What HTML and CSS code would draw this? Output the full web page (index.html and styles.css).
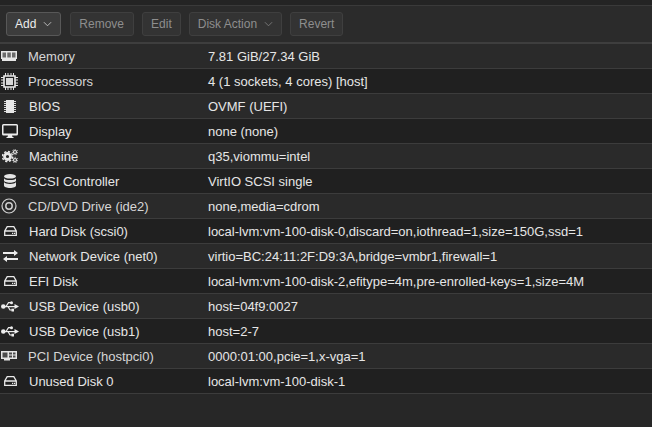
FILE: index.html
```html
<!DOCTYPE html>
<html lang="en">
<head>
    <meta charset="UTF-8">
    <meta name="viewport" content="width=device-width, initial-scale=1.0">
    <title>Hardware</title>
    <link rel="stylesheet" href="styles.css">
</head>
<body>
    <div class="top-strip"></div>

    <div class="toolbar">
        <button class="btn btn-active">Add <svg class="caret" viewBox="0 0 10 6"><path d="M1 1l4 4 4-4"/></svg></button>
        <button class="btn btn-wide">Remove</button>
        <button class="btn">Edit</button>
        <button class="btn">Disk Action <svg class="caret" viewBox="0 0 10 6"><path d="M1 1l4 4 4-4"/></svg></button>
        <button class="btn">Revert</button>
    </div>

    <div class="hw-table">
        <div class="row row-tight">
            <span class="icon"><svg viewBox="0 0 16 10" width="16" height="10"><path d="M0 0h16v8h-1v2H1V8H0z" fill="#e6e6e6"/><path d="M1.500 1.500h3.500v5H1.500zM6.300 1.500h3.500v5H6.300zM11 1.500h3.500v5H11z" fill="#6a6a6a"/></svg></span>
            <span class="name">Memory</span>
            <span class="value">7.81 GiB/27.34 GiB</span>
        </div>
        <div class="row row-tight">
            <span class="icon"><svg viewBox="0 0 17 17" width="17" height="17"><path d="M3 3h11v11H3z" fill="none" stroke="#ececec" stroke-width="1.600"/><path d="M5 5h7v7H5z" fill="#d8d8d8"/><path d="M4.500 0v3M7 0v3M10 0v3M12.500 0v3M4.500 14v3M7 14v3M10 14v3M12.500 14v3M0 4.500h3M0 7h3M0 10h3M0 12.500h3M14 4.500h3M14 7h3M14 10h3M14 12.500h3" stroke="#e4e4e4"/></svg></span>
            <span class="name">Processors</span>
            <span class="value">4 (1 sockets, 4 cores) [host]</span>
        </div>
        <div class="row">
            <span class="icon"><svg viewBox="0 0 12 13" width="12" height="13"><path d="M2 0h8v13H2z" fill="#e8e8e8"/><path d="M0 1.500h2M0 3.500h2M0 5.500h2M0 7.500h2M0 9.500h2M0 11.500h2M10 1.500h2M10 3.500h2M10 5.500h2M10 7.500h2M10 9.500h2M10 11.500h2" stroke="#d8d8d8"/></svg></span>
            <span class="name">BIOS</span>
            <span class="value">OVMF (UEFI)</span>
        </div>
        <div class="row">
            <span class="icon"><svg viewBox="0 0 16 14" width="16" height="14"><path d="M1.500 0h13A1.500 1.500 0 0 1 16 1.500V10a1.500 1.500 0 0 1-1.500 1.500H10l.5 1.500h1v1h-7v-1h1l.5-1.500H1.500A1.500 1.500 0 0 1 0 10V1.500A1.500 1.500 0 0 1 1.500 0zM1.500 1.500V9.500h13V1.500z" fill="#ececec" fill-rule="evenodd"/></svg></span>
            <span class="name">Display</span>
            <span class="value">none (none)</span>
        </div>
        <div class="row">
            <span class="icon"><svg viewBox="0 0 16 14" width="16" height="14"><circle cx="5.500" cy="7.500" r="3" fill="none" stroke="#e8e8e8" stroke-width="2.800"/><circle cx="5.500" cy="7.500" r="5" fill="none" stroke="#e8e8e8" stroke-width="1.500" stroke-dasharray="2.200 1.700"/><circle cx="13" cy="3" r="1.500" fill="none" stroke="#e4e4e4" stroke-width="1.200"/><circle cx="13" cy="3" r="2.700" fill="none" stroke="#e4e4e4" stroke-width=".9" stroke-dasharray="1.200 1.200"/><circle cx="13" cy="11" r="1.500" fill="none" stroke="#e4e4e4" stroke-width="1.200"/><circle cx="13" cy="11" r="2.700" fill="none" stroke="#e4e4e4" stroke-width=".9" stroke-dasharray="1.200 1.200"/></svg></span>
            <span class="name">Machine</span>
            <span class="value">q35,viommu=intel</span>
        </div>
        <div class="row">
            <span class="icon"><svg viewBox="0 0 12 14" width="12" height="14"><ellipse cx="6" cy="2.300" rx="6" ry="2.300" fill="#e4e4e4"/><path d="M0 4.200c1 1.400 3 1.900 6 1.900s5-.5 6-1.900v2.300c0 1.300-2.700 2.200-6 2.200S0 7.800 0 6.500zM0 8c1 1.400 3 1.900 6 1.900S11 9.400 12 8v3.500C12 12.900 9.300 14 6 14s-6-1.100-6-2.500z" fill="#e4e4e4"/></svg></span>
            <span class="name">SCSI Controller</span>
            <span class="value">VirtIO SCSI single</span>
        </div>
        <div class="row row-tight">
            <span class="icon"><svg viewBox="0 0 16 16" width="16" height="16"><circle cx="8" cy="8" r="7" fill="none" stroke="#d0d0d0" stroke-width="1.200"/><circle cx="8" cy="8" r="3.200" fill="none" stroke="#d0d0d0" stroke-width="1.500"/></svg></span>
            <span class="name">CD/DVD Drive (ide2)</span>
            <span class="value">none,media=cdrom</span>
        </div>
        <div class="row">
            <span class="icon"><svg viewBox="0 0 13 10" width="13" height="10"><path d="M3.200 .7h6.600l2.500 4.300v4.300H.7V5zM.7 5h11.600" fill="none" stroke="#e8e8e8" stroke-width="1.300"/><path d="M8 6.800h1.300V8H8zM10 6.800h1.200V8H10z" fill="#e8e8e8"/></svg></span>
            <span class="name">Hard Disk (scsi0)</span>
            <span class="value">local-lvm:vm-100-disk-0,discard=on,iothread=1,size=150G,ssd=1</span>
        </div>
        <div class="row">
            <span class="icon"><svg viewBox="0 0 15 12" width="15" height="12"><path d="M0 2h11V0l4 3-4 3V4H0zM15 8H4V6l-4 3 4 3v-2h11z" fill="#ececec"/></svg></span>
            <span class="name">Network Device (net0)</span>
            <span class="value">virtio=BC:24:11:2F:D9:3A,bridge=vmbr1,firewall=1</span>
        </div>
        <div class="row">
            <span class="icon"><svg viewBox="0 0 13 10" width="13" height="10"><path d="M3.200 .7h6.600l2.500 4.300v4.300H.7V5zM.7 5h11.600" fill="none" stroke="#e8e8e8" stroke-width="1.300"/><path d="M8 6.800h1.300V8H8zM10 6.800h1.200V8H10z" fill="#e8e8e8"/></svg></span>
            <span class="name">EFI Disk</span>
            <span class="value">local-lvm:vm-100-disk-2,efitype=4m,pre-enrolled-keys=1,size=4M</span>
        </div>
        <div class="row">
            <span class="icon"><svg viewBox="0 0 18 11" width="18" height="11"><circle cx="2.300" cy="5.500" r="2.300" fill="#ececec"/><path d="M2 5h12v1.200H2z" fill="#ececec"/><path d="M5 5.500L7.500 1.700H10M7 5.500L9 9h2" fill="none" stroke="#ececec" stroke-width="1.200"/><path d="M13.500 3l4.500 2.500L13.500 8z" fill="#ececec"/><circle cx="10.500" cy="1.700" r="1.500" fill="#ececec"/><path d="M10.500 7.700h2.500V10.500h-2.500z" fill="#ececec"/></svg></span>
            <span class="name">USB Device (usb0)</span>
            <span class="value">host=04f9:0027</span>
        </div>
        <div class="row">
            <span class="icon"><svg viewBox="0 0 18 11" width="18" height="11"><circle cx="2.300" cy="5.500" r="2.300" fill="#ececec"/><path d="M2 5h12v1.200H2z" fill="#ececec"/><path d="M5 5.500L7.500 1.700H10M7 5.500L9 9h2" fill="none" stroke="#ececec" stroke-width="1.200"/><path d="M13.500 3l4.500 2.500L13.500 8z" fill="#ececec"/><circle cx="10.500" cy="1.700" r="1.500" fill="#ececec"/><path d="M10.500 7.700h2.500V10.500h-2.500z" fill="#ececec"/></svg></span>
            <span class="name">USB Device (usb1)</span>
            <span class="value">host=2-7</span>
        </div>
        <div class="row row-tight">
            <span class="icon"><svg viewBox="0 0 16 10" width="16" height="10"><path d="M0 0h16v8H9v1.500H3V8H0z" fill="#e4e4e4"/><path d="M1.500 1.500h5v5h-5zM8 1.500h3v2H8zM12 1.500h2.500v2H12zM8 4.500h3v2H8zM12 4.500h2.500v2H12z" fill="#4a4a4a"/></svg></span>
            <span class="name">PCI Device (hostpci0)</span>
            <span class="value">0000:01:00,pcie=1,x-vga=1</span>
        </div>
        <div class="row">
            <span class="icon"><svg viewBox="0 0 13 10" width="13" height="10"><path d="M3.200 .7h6.600l2.500 4.300v4.300H.7V5zM.7 5h11.600" fill="none" stroke="#e8e8e8" stroke-width="1.300"/><path d="M8 6.800h1.300V8H8zM10 6.800h1.200V8H10z" fill="#e8e8e8"/></svg></span>
            <span class="name">Unused Disk 0</span>
            <span class="value">local-lvm:vm-100-disk-1</span>
        </div>
    </div>
</body>
</html>
```

FILE: styles.css
```css
html, body {
    height: 100%;
}

body {
    margin: 0;
    overflow: hidden;
    background-color: #272727;
    color: #e6e6e6;
    font-family: "Liberation Sans", Arial, sans-serif;
    font-size: 13px;
}

.top-strip {
    height: 5px;
    background-color: #242424;
    border-bottom: 1px solid #3a3a3a;
}

.toolbar {
    display: flex;
    gap: 8px;
    height: 38px;
    padding: 6px 6px 0;
    box-sizing: border-box;
    background-color: #2b2b2b;
    border-bottom: 2px solid #3e3e3e;
}

.btn {
    display: flex;
    align-items: center;
    gap: 7px;
    height: 24px;
    padding: 0 8px;
    background-color: #333333;
    border: 1px solid #3f3f3f;
    border-radius: 3px;
    color: #8e8e8e;
    font-family: inherit;
    font-size: 12px;
}

.btn-wide {
    padding-right: 9px;
}

.btn-active {
    margin-right: 1px;
    background-color: #3c3c3c;
    border-color: #585858;
    color: #ececec;
}

.caret {
    width: 9px;
    height: 6px;
    fill: none;
    stroke: currentColor;
    opacity: 0.8;
}

.row {
    display: grid;
    grid-template-columns: 29px 179px 1fr;
    align-items: center;
    height: 25px;
    box-sizing: border-box;
    border-bottom: 1px solid #3c3c3c;
    background-color: #2a2a2a;
}

.row:nth-child(even) {
    background-color: #202020;
}

.icon {
    display: flex;
    align-items: center;
    justify-content: center;
    width: 20px;
}

.icon svg {
    display: block;
}

/* these rows sit one pixel further left, with a slightly dimmer label */
.row-tight .icon {
    margin-left: -1px;
}

.row-tight .name {
    margin-left: -1px;
    color: #d6d6d6;
}
```
